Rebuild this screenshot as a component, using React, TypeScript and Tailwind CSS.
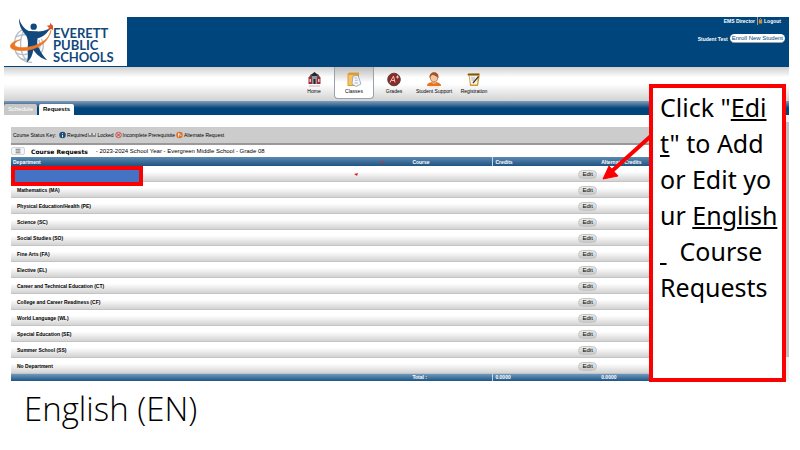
import React from 'react';
import { Menu } from 'lucide-react';

const departments = [
  '',
  'Mathematics (MA)',
  'Physical Education/Health (PE)',
  'Science (SC)',
  'Social Studies (SO)',
  'Fine Arts (FA)',
  'Elective (EL)',
  'Career and Technical Education (CT)',
  'College and Career Readiness (CF)',
  'World Language (WL)',
  'Special Education (SE)',
  'Summer School (SS)',
  'No Department',
];

const Logo: React.FC = () => (
  <a href="#" className="flex w-[123px] bg-white text-[#12487c]">
    <svg viewBox="0 6 147 147" className="h-[49px] w-[49px] shrink-0" fill="none">
      <g stroke="#b4bfc9" strokeWidth="4">
        <path d="M56 44 C34 54 28 80 32 100 C38 126 58 142 84 142" />
        <path d="M60 46 C44 76 46 118 72 140" />
        <path d="M36 66 C48 60 60 58 70 60 M34 112 C48 120 60 120 70 117 M48 130 C58 134 68 134 74 132" />
        <path d="M112 72 C122 88 118 106 110 116 M104 74 C110 88 108 100 104 108" />
      </g>
      <circle cx="89" cy="35" r="9.500" fill="#12487c" />
      <path d="M45 10 C50 28 60 42 74 48 L96 49 C110 50 122 48 138 40 C130 56 116 66 101 70 C98 82 100 92 106 102 C112 114 120 126 130 136 C112 130 96 118 88 104 C86 120 80 132 68 143 C74 126 70 112 71 98 C73 84 72 72 67 62 C53 48 44 30 45 10 Z" fill="#12487c" />
      <path d="M50 74 C28 78 16 88 20 97 C25 108 58 110 86 102 C112 94 132 80 141 46 C138 66 120 82 92 92 C66 100 36 100 32 91 C30 84 38 78 50 74 Z" fill="#ee7623" stroke="#ee7623" strokeWidth="2" />
      <path d="M140 23 L144 31 L153 31 L147 37 L150 46 L141 42 L133 47 L134 37 L128 32 L137 31 Z" fill="#dd5428" />
    </svg>
    <span className="pt-[10px] font-['Lato'] text-[13px] leading-[12px] font-bold">
      EVERETT<br />PUBLIC<br />SCHOOLS
    </span>
  </a>
);

const HomeIcon = () => (
  <svg viewBox="0 0 16 16" className="h-4 w-4">
    <path d="M3 5 L5 2 H12 L14 5 Z" fill="#4b4f57" />
    <path d="M6 2 L8.500 0 L11 2 V4 H6 Z" fill="#25282d" />
    <path d="M2.500 5 h12 v7 h-12z" fill="#a32a35" />
    <path d="M6 4 h5 v8 h-5z" fill="#8f979e" />
    <path d="M7.500 7 h2 v5 h-2z" fill="#35262a" />
    <path d="M3.500 7 h1.500 v3 h-1.500z M12 7 h1.500 v3 h-1.500z" fill="#d9c9cc" />
    <path d="M3 13 h11 v2 h-11z" fill="#e6d6d9" />
  </svg>
);

const ClassesIcon = () => (
  <svg viewBox="0 0 16 16" className="h-4 w-4">
    <path d="M1.500 2 L3 0.500 H13 V13 L11 14 H1.500 Z" fill="#dd9b30" />
    <path d="M2.500 3 h9 v10 h-9z" fill="#f3c566" />
    <path d="M7 4 L12 3.500 L15 12 L10 14.500 L6 12 Z" fill="#f4f7fb" stroke="#8593a5" strokeWidth=".7" />
    <path d="M8.500 11 L12 11 M9 8.500 L12 8 M8.500 6 L11 6" stroke="#8ba3c4" strokeWidth=".7" />
  </svg>
);

const GradesIcon = () => (
  <svg viewBox="0 0 16 16" className="h-4 w-4">
    <circle cx="8" cy="7.500" r="6.300" fill="#8c2a26" stroke="#574340" />
    <path d="M4 10.500 L7.500 4 L9 10.500 M5.500 8.500 H9 M10 5 h3 M11.500 3.500 v3" stroke="#edc5bd" strokeWidth="1" fill="none" />
  </svg>
);

const SupportIcon = () => (
  <svg viewBox="0 0 16 16" className="h-4 w-4">
    <path d="M1 14 C1 11 4 10 8 10 S15 11 15 14 Z" fill="#e8731c" />
    <path d="M6 9 h4 v2 l-2 1 l-2-1z" fill="#f0b88d" />
    <ellipse cx="8" cy="5.500" rx="3.600" ry="4.500" fill="#f4c7a0" stroke="#a35b30" strokeWidth=".7" />
    <path d="M3.500 6 C2.500 -1 13.500 -2 12.500 6 C11 5 9 3 6 3 C5 4 4 5 3.500 6 Z" fill="#a5542a" />
    <path d="M3 14.500 h10 v1 h-10z" fill="#f6ddca" />
  </svg>
);

const RegistrationIcon = () => (
  <svg viewBox="0 0 16 16" className="h-4 w-4">
    <path d="M1 2 L14 1.500 L13.500 5 L12 14 L4 14 L3 5 Z" fill="#d3982f" />
    <path d="M3.500 4 H12 L11 12.500 H5 Z" fill="#f7f4eb" />
    <path d="M2 1.500 h11 v1.500 h-11z" fill="#6f5a35" />
    <path d="M5 6 h4 M5.500 8 h3" stroke="#9da3aa" strokeWidth=".8" />
    <path d="M7 11 L12.500 4.500" stroke="#3a3a3a" strokeWidth="1.200" />
  </svg>
);

const navItems = [
  { label: 'Home', icon: <HomeIcon /> },
  { label: 'Classes', icon: <ClassesIcon />, active: true },
  { label: 'Grades', icon: <GradesIcon /> },
  { label: 'Student Support', icon: <SupportIcon /> },
  { label: 'Registration', icon: <RegistrationIcon /> },
];

const Header: React.FC = () => (
  <header>
    <div className="flex h-[50px] justify-between border-b border-[#00457c] bg-[#00457c]">
      <Logo />
      <div className="flex flex-col items-end pr-1 text-[5px] leading-[8px] font-bold text-white">
        <div className="flex items-center gap-px pr-1">
          <span className="pr-px">EMS Director</span>
          <svg viewBox="0 0 6 8" className="h-2 w-[6px] border-l border-slate-400">
            <path d="M2 4 V2 Q3 0 4 2 V4" fill="none" stroke="#d7b46a" />
            <path d="M1 3 h4 v4 h-4z" fill="#d98d2a" />
          </svg>
          <a href="#">Logout</a>
        </div>
        <div className="flex items-center gap-[2px] pt-[9px]">
          <span>Student Test</span>
          <button className="h-[9px] rounded-full border-b border-gray-400 bg-white px-[2px] text-[6px] leading-[8px] font-normal text-[#00457c]">Enroll New Student</button>
        </div>
      </div>
    </div>
    <nav className="flex h-[34px] justify-center bg-[linear-gradient(#cfcfcf,#fff_30%,#fff_50%,#d2d2d2)] pr-[5px]">
      {navItems.map((item) => (
        <a
          key={item.label}
          href="#"
          className={`flex h-8 w-10 flex-col items-center rounded-b-sm pt-[5px] text-[5px] leading-[7px] whitespace-nowrap text-black ${item.active ? 'border border-t-0 border-gray-400 bg-linear-to-b from-[#bcbcbc] to-white to-50%' : ''}`}
        >
          {item.icon}
          {item.label}
        </a>
      ))}
    </nav>
    <div className="flex h-[14px] items-end gap-[2px] bg-linear-to-b from-[#7f9fb9] to-[#00457c] to-50% text-[6px] leading-[11px] font-bold">
      <button className="h-[11px] rounded-t-xs bg-[#c8c8c8] px-1 font-normal text-white">Schedule</button>
      <button className="h-[11px] rounded-t-xs bg-white px-1 text-black">Requests</button>
    </div>
  </header>
);

const StatusKey: React.FC = () => (
  <div className="flex h-[18px] items-center gap-px border-b-2 border-[#999] bg-[#ccc] pl-[2px] text-[5px] leading-[8px] text-black">
    <span className="pr-[2px]">Course Status Key:</span>
    <svg viewBox="0 0 8 8" className="h-2 w-[7px]"><circle cx="4" cy="4" r="3.700" fill="#1d4e79" /><path d="M3.500 2 h1 v1 h-1z M3.500 4 h1 v2.500 h-1z" fill="#fff" /></svg>
    <span>Required</span>
    <svg viewBox="0 0 8 8" className="h-2 w-2"><path d="M0 2 h8 v4 h-8z" fill="#8a8a8a" /><path d="M1 2 h2 v2 h-2z M5 2 h2 v2 h-2z" fill="#ddd" /></svg>
    <span>Locked</span>
    <svg viewBox="0 0 8 8" className="h-2 w-[7px]"><circle cx="4" cy="4" r="3.300" fill="#e9b7b5" stroke="#b86361" /><path d="M2 2 L6 6 M6 2 L2 6" stroke="#b5322f" /></svg>
    <span>Incomplete Prerequisite</span>
    <svg viewBox="0 0 8 8" className="h-2 w-[7px]"><circle cx="4" cy="4" r="3.700" fill="#d9722b" /><path d="M3 6 L3 2 L6 5" stroke="#fff" fill="none" /></svg>
    <span>Alternate Request</span>
  </div>
);

const RequestsTable: React.FC = () => (
  <table className="w-full table-fixed border-separate border-spacing-0 text-left text-[5px] leading-[8px] font-bold">
    <colgroup>
      <col className="w-[51.6%]" />
      <col className="w-[10.6%]" />
      <col className="w-[13.8%]" />
      <col />
    </colgroup>
    <thead>
      <tr className="h-[9px] bg-linear-to-b from-[#5c89b0] to-[#1e5484] text-white">
        <th className="p-0 pl-[2px]">Department</th>
        <th className="p-0 pl-[2px]">Course</th>
        <th className="border-l border-slate-300 p-0 pl-[2px]">Credits</th>
        <th className="p-0 pl-[2px]">Alternate Credits</th>
      </tr>
    </thead>
    <tbody>
      {departments.map((name) => (
        <tr key={name} className="h-4 bg-[linear-gradient(#fff_35%,#d4d4d4_92%,#b9b9b9)] text-black">
          <td className="p-0 pl-[6px]">
            {name || <div className="absolute top-[39px] left-0 h-5 w-[132px] border-4 border-[#fb0000] bg-[#4472c4]" />}
          </td>
          <td className="p-0" />
          <td className="p-0 pr-[2px] text-right">
            <button className="ml-auto block h-[9px] w-[19px] rounded-full border border-[#c4c4c4] bg-linear-to-b from-[#ececec] to-[#c8c8c8] text-center text-[6px] leading-[7px] font-normal text-black">Edit</button>
          </td>
          <td className="p-0" />
        </tr>
      ))}
    </tbody>
    <tfoot>
      <tr className="h-[7px] bg-linear-to-b from-[#6d9abf] to-[#1e5484] leading-[7px] text-white">
        <td className="p-0" />
        <td className="p-0 pl-[2px]">Total :</td>
        <td className="border-l border-slate-300 p-0 pl-[2px]">0.0000</td>
        <td className="p-0 pl-[2px]">0.0000</td>
      </tr>
    </tfoot>
  </table>
);

const Callout: React.FC = () => (
  <aside className="absolute top-[84px] right-[14px] h-[298px] w-[137px] border-4 border-[#fb0000] bg-white pt-px pl-[7px] font-['Noto_Sans'] text-[25px] leading-[36px] whitespace-pre text-black">
    Click "<u>Edi</u><br />
    <u>t</u>" to Add<br />
    or Edit yo<br />
    ur <u>English</u><br />
    <u> </u>{'  '}Course<br />
    Requests
  </aside>
);

export default function App() {
  return (
    <div className="relative min-h-screen bg-white pt-[17px] pr-[11px] pl-1 font-['Liberation_Sans',sans-serif]">
      <Header />
      <div className="flex">
        <main className="min-w-0 flex-1 pt-3 pl-[7px]">
          <div className="relative">
            <StatusKey />
            <div className="flex h-3 items-center text-[6px] text-black">
              <button aria-label="Collapse" className="flex h-2 w-[14px] items-center justify-center rounded-xs border border-gray-300 bg-gray-100">
                <Menu className="h-[6px] w-[6px]" />
              </button>
              <h1 className="pl-[6px] font-['DejaVu_Sans'] text-[6px] font-bold">Course Requests</h1>
              <span className="pl-2">- 2023-2024 School Year - Evergreen Middle School - Grade 08</span>
            </div>
            <RequestsTable />
          </div>
        </main>
        <div className="w-1 bg-[#f0f0f0] pt-[7px] pb-6">
          <div className="h-full bg-[#c1c1c1]" />
        </div>
      </div>
      <h2 className="pt-[5px] pl-5 font-['Open_Sans'] text-[33px] leading-[46px] font-light text-black">English (EN)</h2>
      <svg viewBox="0 0 300 40" className="absolute top-[144px] right-[150px] h-10 w-[300px] overflow-visible">
        <path d="M302 -9 L262 27" stroke="#fb0000" strokeWidth="4" />
        <path d="M253 35 L259 22 L268 32 Z" fill="#fb0000" stroke="#fb0000" />
        <path d="M31 17 h2 v2 h-2z M4 30 l4 -1 l-1 3 z" fill="#dc2626" />
      </svg>
      <Callout />
    </div>
  );
}
